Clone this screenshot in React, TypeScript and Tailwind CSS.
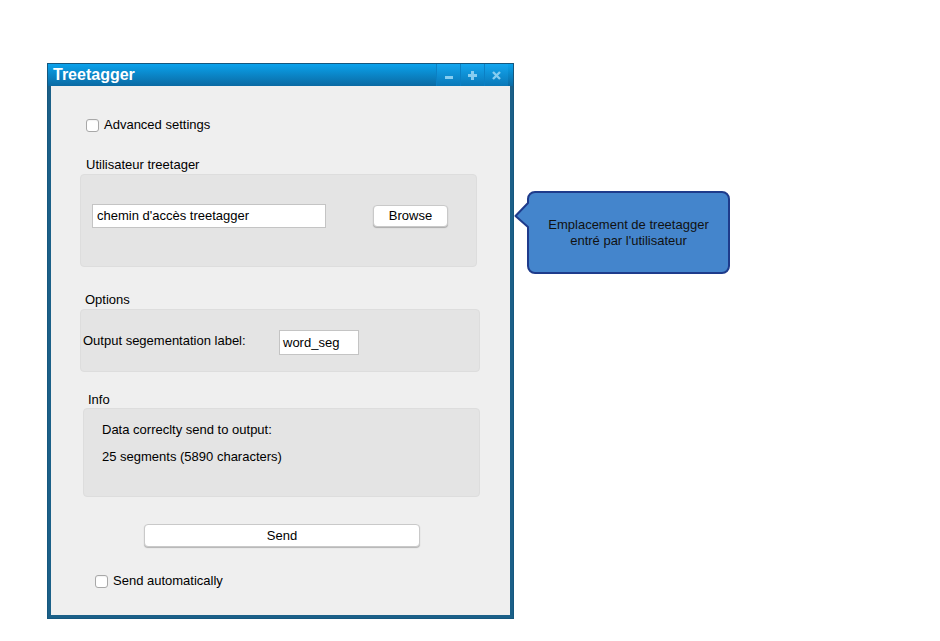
import React from "react";

const Checkbox = () => (
  <span className="w-[13px] h-[13px] rounded-[3px] border border-[#a8a8a8] bg-white shadow-[inset_0_1px_1px_rgba(0,0,0,0.05)] shrink-0" />
);

const TitleButton = ({ children }: { children: React.ReactNode }) => (
  <div className="w-[24px] h-[22px] flex items-center justify-center border-l border-[#0b80c4] bg-gradient-to-b from-[#13a6ef] to-[#0a78b8]">
    {children}
  </div>
);

const App = () => {
  return (
    <div className="min-h-screen bg-white flex items-start pt-[63px] pl-[47px] font-['Liberation_Sans',Arial,sans-serif] text-[13px] text-black">
      <div className="w-[467px] flex flex-col border border-[#15577e]">
        {/* title bar */}
        <div className="h-[22px] flex items-center justify-between bg-gradient-to-b from-[#0aa2ec] to-[#0a6aa3]">
          <span className="pl-[5px] text-white font-bold text-[16px] leading-none">Treetagger</span>
          <div className="flex items-center pr-[5px] h-full">
            <TitleButton>
              <span className="w-[8px] h-[3px] bg-[#86cdf0] mt-[5px]" />
            </TitleButton>
            <TitleButton>
              <svg width="9" height="9" viewBox="0 0 9 9">
                <path d="M3 0h3v3h3v3H6v3H3V6H0V3h3z" fill="#86cdf0" />
              </svg>
            </TitleButton>
            <TitleButton>
              <svg width="9" height="9" viewBox="0 0 9 9">
                <path d="M1 1l7 7M8 1L1 8" stroke="#86cdf0" strokeWidth="2.4" />
              </svg>
            </TitleButton>
          </div>
        </div>

        {/* body */}
        <div className="h-[532px] bg-[#efefef] border-x-[3px] border-b-[3px] border-[#1b6088] flex flex-col">
          <div className="mt-[31px] ml-[35px] h-[16px] flex items-center gap-[5px]">
            <Checkbox />
            <span>Advanced settings</span>
          </div>

          <div className="mt-[24px] ml-[35px] h-[16px] flex items-center">Utilisateur treetager</div>
          <div className="mt-[1px] ml-[29px] w-[397px] h-[93px] rounded-[4px] bg-[#e4e4e4] border border-[#dddddd] flex items-start pt-[29px] pl-[11px]">
            <div className="w-[234px] h-[24px] bg-white border border-[#c4c4c4] flex items-center px-[4px]">
              chemin d'accès treetagger
            </div>
            <button className="ml-[47px] mt-[1px] w-[75px] h-[22px] rounded-[4px] bg-white border border-[#c9c9c9] shadow-[0_1px_1px_rgba(0,0,0,0.25)] flex items-center justify-center">
              Browse
            </button>
          </div>

          <div className="mt-[25px] ml-[34px] h-[16px] flex items-center">Options</div>
          <div className="mt-[1px] ml-[29px] w-[400px] h-[63px] rounded-[4px] bg-[#e4e4e4] border border-[#dddddd] flex items-center pl-[2px]">
            <span className="w-[196px]">Output segementation label:</span>
            <div className="w-[80px] h-[25px] bg-white border border-[#c4c4c4] flex items-center px-[3px] mt-[4px]">
              word_seg
            </div>
          </div>

          <div className="mt-[20px] ml-[37px] h-[16px] flex items-center">Info</div>
          <div className="ml-[32px] w-[397px] h-[89px] rounded-[4px] bg-[#e4e4e4] border border-[#dddddd] flex flex-col pt-[13px] pl-[18px]">
            <div className="h-[16px] flex items-center">Data correclty send to output:</div>
            <div className="mt-[11px] h-[16px] flex items-center">25 segments (5890 characters)</div>
          </div>

          <button className="mt-[27px] ml-[93px] w-[276px] h-[23px] rounded-[4px] bg-white border border-[#c9c9c9] shadow-[0_1px_1px_rgba(0,0,0,0.25)] flex items-center justify-center">
            Send
          </button>

          <div className="mt-[26px] ml-[44px] h-[16px] flex items-center gap-[5px]">
            <Checkbox />
            <span>Send automatically</span>
          </div>
        </div>
      </div>

      {/* callout */}
      <div className="relative mt-[128px] w-[217px] h-[84px]">
        <svg width="217" height="84" viewBox="0 0 217 84" className="absolute inset-0">
          <path
            d="M21 1H208a7 7 0 0 1 7 7V75a7 7 0 0 1-7 7H21a7 7 0 0 1-7-7V36L1.5 25L14 12V8a7 7 0 0 1 7-7z"
            fill="#4485cc"
            stroke="#1e3b8b"
            strokeWidth="2"
            strokeLinejoin="round"
          />
        </svg>
        <div className="absolute left-[14px] right-[2px] top-[1px] bottom-[2px] flex flex-col items-center justify-center text-[13px] leading-[16px] text-[#111] text-center">
          <span>Emplacement de treetagger</span>
          <span>entré par l'utilisateur</span>
        </div>
      </div>
    </div>
  );
};

export default App;
